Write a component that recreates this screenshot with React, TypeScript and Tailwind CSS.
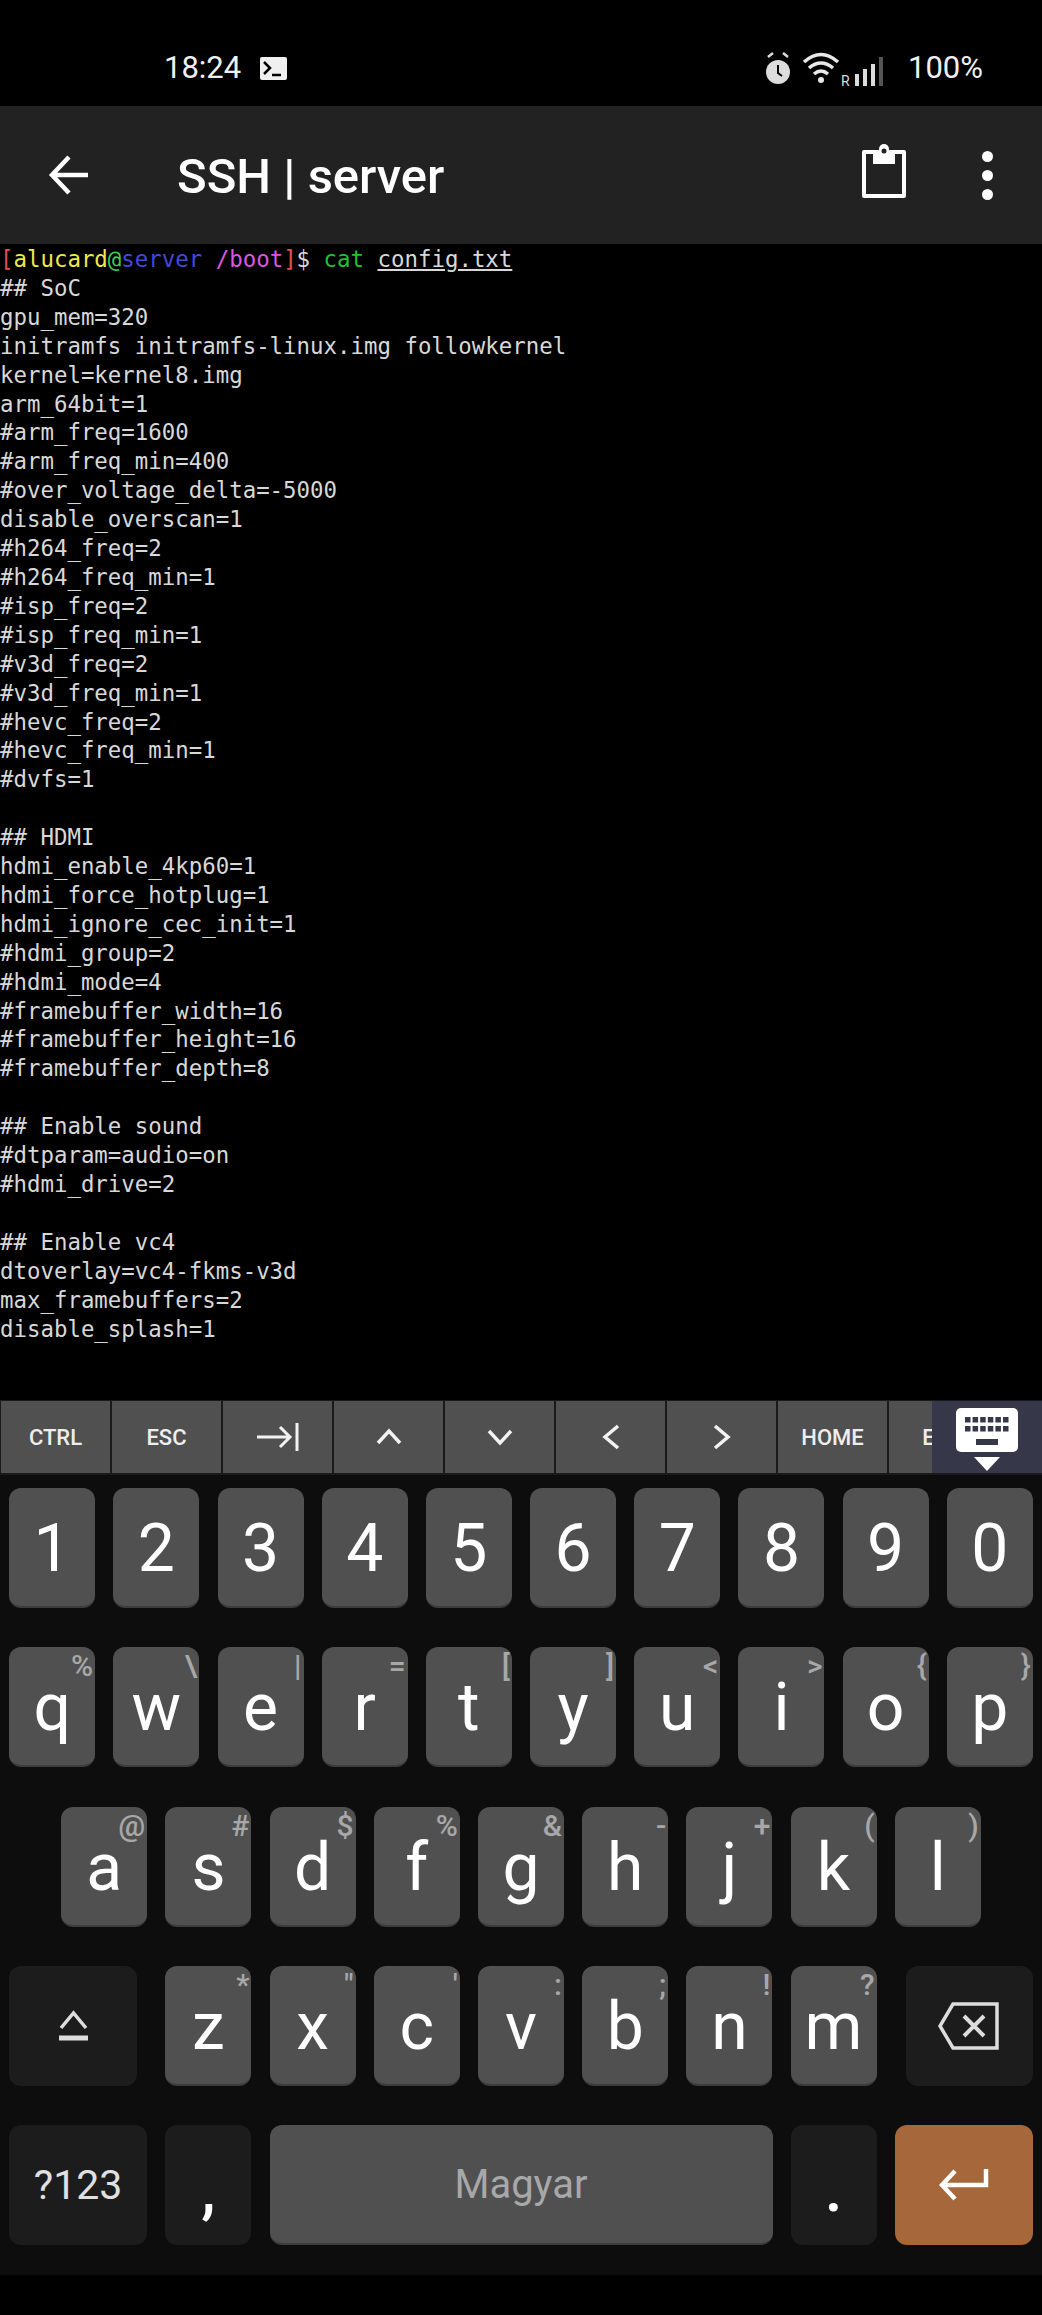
import type { ReactNode } from 'react';

const configLines = [
  '## SoC',
  'gpu_mem=320',
  'initramfs initramfs-linux.img followkernel',
  'kernel=kernel8.img',
  'arm_64bit=1',
  '#arm_freq=1600',
  '#arm_freq_min=400',
  '#over_voltage_delta=-5000',
  'disable_overscan=1',
  '#h264_freq=2',
  '#h264_freq_min=1',
  '#isp_freq=2',
  '#isp_freq_min=1',
  '#v3d_freq=2',
  '#v3d_freq_min=1',
  '#hevc_freq=2',
  '#hevc_freq_min=1',
  '#dvfs=1',
  '',
  '## HDMI',
  'hdmi_enable_4kp60=1',
  'hdmi_force_hotplug=1',
  'hdmi_ignore_cec_init=1',
  '#hdmi_group=2',
  '#hdmi_mode=4',
  '#framebuffer_width=16',
  '#framebuffer_height=16',
  '#framebuffer_depth=8',
  '',
  '## Enable sound',
  '#dtparam=audio=on',
  '#hdmi_drive=2',
  '',
  '## Enable vc4',
  'dtoverlay=vc4-fkms-v3d',
  'max_framebuffers=2',
  'disable_splash=1',
];

const row1 = ['1', '2', '3', '4', '5', '6', '7', '8', '9', '0'];
const row2 = [['q', '%'], ['w', '\\'], ['e', '|'], ['r', '='], ['t', '['], ['y', ']'], ['u', '<'], ['i', '>'], ['o', '{'], ['p', '}']];
const row3 = [['a', '@'], ['s', '#'], ['d', '$'], ['f', '%'], ['g', '&'], ['h', '-'], ['j', '+'], ['k', '('], ['l', ')']];
const row4 = [['z', '*'], ['x', '"'], ['c', "'"], ['v', ':'], ['b', ';'], ['n', '!'], ['m', '?']];

function Chevron({ d }: { d: string }) {
  return (
    <svg width="34" height="34" viewBox="0 0 34 34" fill="none" stroke="#f2f2f2" strokeWidth="3.5">
      <path d={d} />
    </svg>
  );
}

function ExtraKey({ children }: { children: ReactNode }) {
  return (
    <div className="w-[109px] h-full shrink-0 bg-[#505050] flex items-center justify-center text-[22px] font-medium text-[#eeeeee]">
      {children}
    </div>
  );
}

function Key({ label, hint }: { label: string; hint?: string }) {
  return (
    <div className="relative w-[86px] h-[120px] shrink-0 rounded-[12px] bg-[#505050] border-b-2 border-[#3c3c3c] flex items-center justify-center text-[66px] font-normal leading-none text-white">
      <span className="mt-[4px]">{label}</span>
      {hint && (
        <span className="absolute top-[4px] right-[2px] text-[30px] leading-none font-medium text-[#a8a8a8]">{hint}</span>
      )}
    </div>
  );
}

export default function App() {
  return (
    <div className="w-[1042px] h-[2315px] bg-black flex flex-col overflow-hidden font-['Roboto',sans-serif]">
      {/* status bar */}
      <div className="h-[106px] shrink-0 flex items-center justify-between pl-[164px] pr-[59px] pt-[31px] text-[31px] text-[#f0f0f0]">
        <div className="flex items-center gap-[19px]">
          <span>18:24</span>
          <svg width="27" height="23" viewBox="0 0 27 23">
            <rect width="27" height="23" rx="2" fill="#f0f0f0" />
            <path d="M4 5l6 6-6 6" fill="none" stroke="#000" strokeWidth="2.5" />
            <path d="M12 18h9" stroke="#000" strokeWidth="2.5" />
          </svg>
        </div>
        <div className="flex items-center">
          <svg width="130" height="40" viewBox="0 0 130 40">
            <circle cx="13" cy="23" r="12" fill="#dcdcdc" />
            <path d="M13 16v8l4 3" fill="none" stroke="#000" strokeWidth="2" />
            <path d="M3 8l5-4M23 8l-5-4" stroke="#dcdcdc" strokeWidth="2.5" />
            <path d="M39 13q17-15 34 0M44 19q12-10 24 0M49 25q7-6 14 0" fill="none" stroke="#e8e8e8" strokeWidth="3.5" />
            <circle cx="56" cy="31" r="3" fill="#e8e8e8" />
            <text x="76" y="37" fontSize="14" fill="#dcdcdc" fontFamily="Roboto">R</text>
            <rect x="90" y="25" width="4" height="12" fill="#dcdcdc" />
            <rect x="98" y="20" width="4" height="17" fill="#dcdcdc" />
            <rect x="106" y="15" width="4" height="22" fill="#dcdcdc" />
            <rect x="114" y="8" width="4" height="29" fill="#555" />
          </svg>
          <span className="ml-[13px]">100%</span>
        </div>
      </div>

      {/* toolbar */}
      <div className="h-[138px] shrink-0 bg-[#222222] flex items-center pl-[48px] pr-[49px] text-white">
        <svg width="42" height="42" viewBox="0 0 42 42" fill="none" stroke="#fff" strokeWidth="4.5">
          <path d="M40 21H5M21 3L4 21l17 18" />
        </svg>
        <div className="ml-[87px] mt-[3px] text-[49px] font-medium leading-none">SSH | server</div>
        <svg width="46" height="56" viewBox="0 0 46 56" className="ml-auto mt-[-8px]" fill="none">
          <path d="M3 9h40v44H3z" stroke="#fff" strokeWidth="4" strokeLinejoin="round" />
          <path d="M12 8h22v13H12z" fill="#fff" />
          <circle cx="23" cy="6" r="5" fill="#fff" />
          <circle cx="23" cy="8" r="2.5" fill="#222" />
        </svg>
        <div className="ml-[75px] flex flex-col gap-[8px]">
          <div className="w-[11px] h-[11px] rounded-full bg-white" />
          <div className="w-[11px] h-[11px] rounded-full bg-white" />
          <div className="w-[11px] h-[11px] rounded-full bg-white" />
        </div>
      </div>

      {/* terminal */}
      <div className="h-[1156px] shrink-0 font-['DejaVu_Sans_Mono',monospace] text-[22.4px] leading-[28.92px] text-[#d8d8d8] pt-[1px] whitespace-pre">
        <div>
          <span className="text-[#e05050]">[</span>
          <span className="text-[#f0e84a]">alucard</span>
          <span className="text-[#3fd05a]">@</span>
          <span className="text-[#4448d8]">server </span>
          <span className="text-[#dd55e0]">/boot</span>
          <span className="text-[#e05050]">]</span>
          <span>$ </span>
          <span className="text-[#22c032]">cat</span>
          <span> </span>
          <span className="underline">config.txt</span>
        </div>
        {configLines.map((line, i) => (
          <div key={i} className="h-[28.92px]">{line}</div>
        ))}
      </div>

      {/* extra keys */}
      <div className="relative h-[75px] shrink-0 bg-[#1a1a1a] flex gap-[2px] pl-[1px] pt-[1px] pb-[2px] overflow-hidden">
        <ExtraKey>CTRL</ExtraKey>
        <ExtraKey>ESC</ExtraKey>
        <ExtraKey>
          <svg width="44" height="34" viewBox="0 0 44 34" fill="none" stroke="#f2f2f2" strokeWidth="3">
            <path d="M1 17h33M24 7l10 10-10 10" />
            <path d="M41 3v28" />
          </svg>
        </ExtraKey>
        <ExtraKey><Chevron d="M6 23L17 11l11 12" /></ExtraKey>
        <ExtraKey><Chevron d="M6 11l11 12 11-12" /></ExtraKey>
        <ExtraKey><Chevron d="M24 6L11 17l13 11" /></ExtraKey>
        <ExtraKey><Chevron d="M10 6l13 11-13 11" /></ExtraKey>
        <ExtraKey>HOME</ExtraKey>
        <ExtraKey>END</ExtraKey>
        <div className="absolute right-0 top-[1px] bottom-[2px] w-[110px] bg-[#363849] flex flex-col items-center pt-[7px]">
          <svg width="62" height="44" viewBox="0 0 62 44">
            <rect width="62" height="44" rx="5" fill="#fff" />
            <g fill="#36384a">
              {[0, 1, 2, 3, 4, 5].map((c) => (
                <g key={c}>
                  <rect x={9 + c * 7.6} y="9" width="5.5" height="5.5" />
                  <rect x={9 + c * 7.6} y="18" width="5.5" height="5.5" />
                </g>
              ))}
              <rect x="20" y="31" width="22" height="6" />
            </g>
          </svg>
          <svg width="28" height="14" viewBox="0 0 28 14" className="mt-[5px]">
            <path d="M1 0h26L14 14z" fill="#fff" />
          </svg>
        </div>
      </div>

      {/* keyboard */}
      <div className="h-[800px] shrink-0 bg-[#0d0d0d] pt-[13px] flex flex-col gap-[39.25px]">
        <div className="flex justify-center gap-[18.2px]">
          {row1.map((k) => <Key key={k} label={k} />)}
        </div>
        <div className="flex justify-center gap-[18.2px]">
          {row2.map(([k, h]) => <Key key={k} label={k} hint={h} />)}
        </div>
        <div className="flex justify-center gap-[18.2px]">
          {row3.map(([k, h]) => <Key key={k} label={k} hint={h} />)}
        </div>
        <div className="flex justify-center gap-[18.2px]">
          <div className="w-[128px] h-[120px] shrink-0 mr-[10px] rounded-[12px] bg-[#1c1c1c] flex items-center justify-center">
            <svg width="31" height="32" viewBox="0 0 31 32" fill="none" stroke="#dddddd" strokeWidth="3.5">
              <path d="M3 18L15.500 3 28 18" />
              <path d="M1 28h29" strokeWidth="5" />
            </svg>
          </div>
          {row4.map(([k, h]) => <Key key={k} label={k} hint={h} />)}
          <div className="w-[127px] h-[120px] shrink-0 ml-[11px] rounded-[12px] bg-[#1c1c1c] flex items-center justify-center">
            <svg width="62" height="48" viewBox="0 0 62 48" fill="none" stroke="#dddddd" strokeWidth="3.5">
              <path d="M15 2h44v44H15L2 24z" />
              <path d="M26 14l20 20M46 14L26 34" strokeWidth="4" />
            </svg>
          </div>
        </div>
        <div className="flex justify-center gap-[18.2px]">
          <div className="w-[138px] h-[120px] shrink-0 rounded-[12px] bg-[#1c1c1c] flex items-center justify-center pt-[2px] text-[41px] text-[#e0e0e0]">?123</div>
          <div className="w-[86px] h-[120px] shrink-0 rounded-[12px] bg-[#1c1c1c] flex items-center justify-center pt-[10px] text-[64px] font-medium text-white">,</div>
          <div className="w-[503px] h-[120px] shrink-0 rounded-[12px] bg-[#505050] border-b-2 border-[#3c3c3c] flex items-center justify-center pt-[2px] text-[40px] text-[#a8a8a8]">Magyar</div>
          <div className="w-[86px] h-[120px] shrink-0 rounded-[12px] bg-[#1c1c1c] flex items-center justify-center pt-[10px] text-[64px] font-medium text-white">.</div>
          <div className="w-[138px] h-[120px] shrink-0 rounded-[12px] bg-[#a6673a] flex items-center justify-center">
            <svg width="50" height="32" viewBox="0 0 50 32" fill="none" stroke="#fff" strokeWidth="4.5">
              <path d="M47 0v16H4M16 2L3 16l13 14" />
            </svg>
          </div>
        </div>
      </div>
    </div>
  );
}
